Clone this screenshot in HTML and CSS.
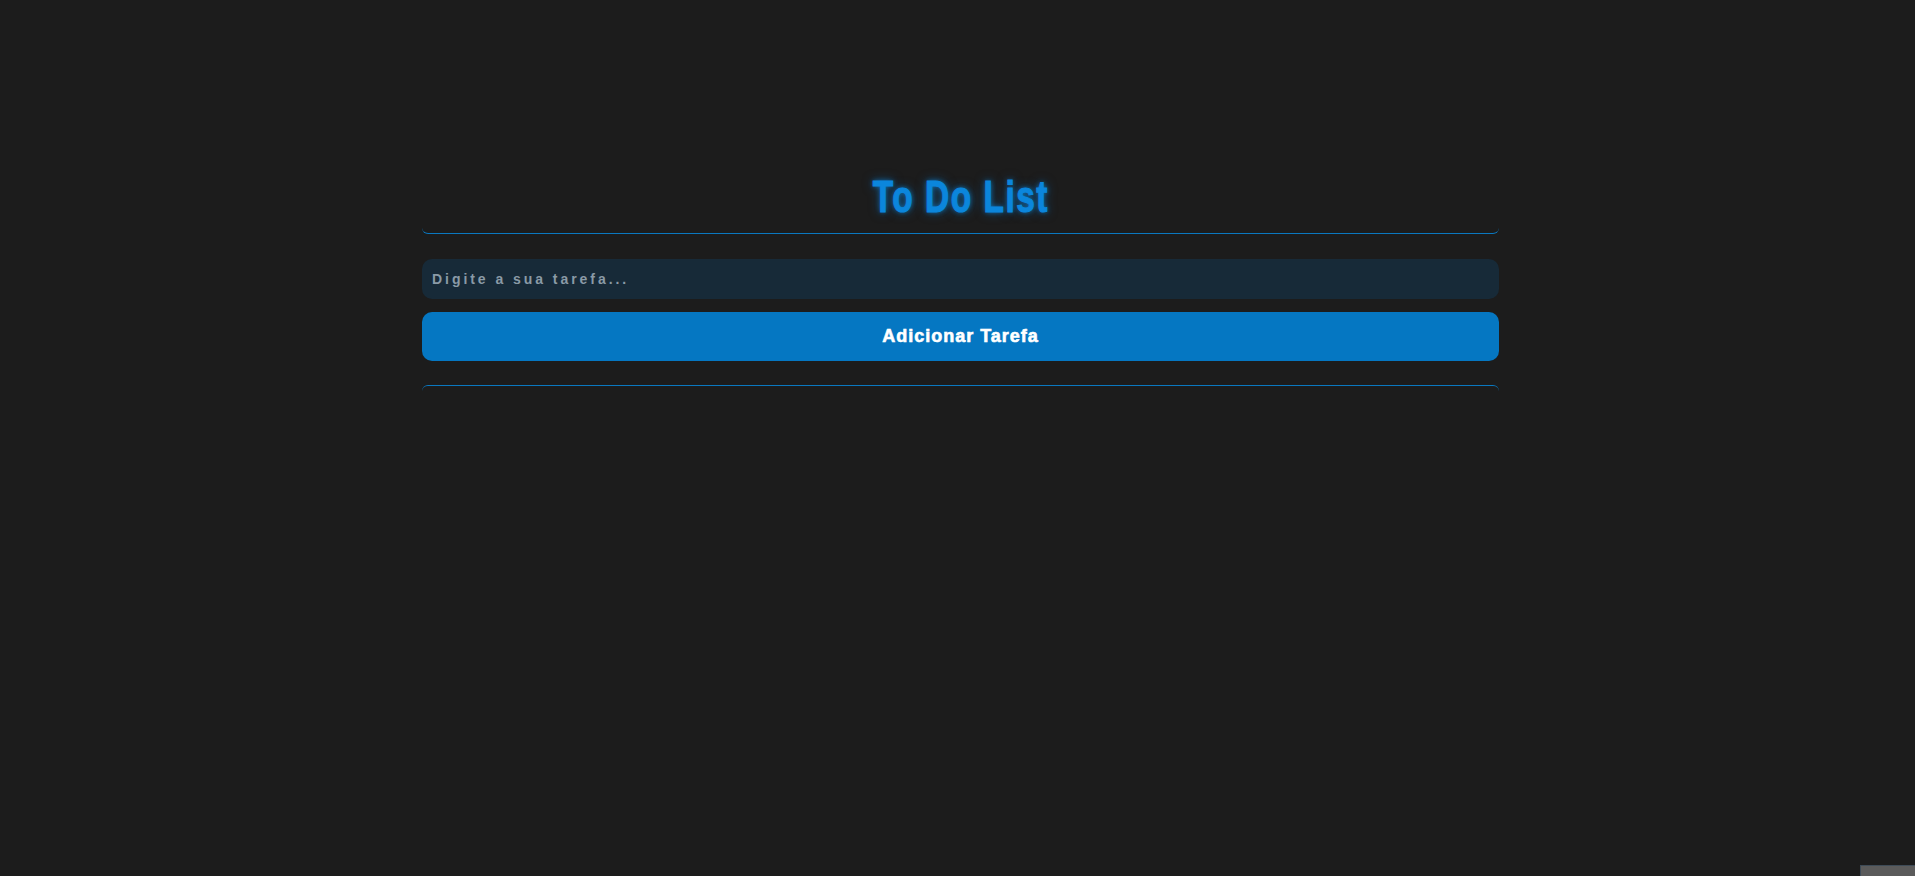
FILE: index.html
```html
<!DOCTYPE html>
<html lang="pt">
<head>
<meta charset="utf-8">
<title>To Do List</title>
<link rel="stylesheet" href="styles.css">
</head>
<body>
<main class="app">
  <header class="app-header">
    <h1 class="title"><span class="title-text">To Do List</span></h1>
  </header>
  <form class="task-form">
    <input class="task-input" type="text" placeholder="Digite a sua tarefa...">
    <button class="task-button" type="button">Adicionar Tarefa</button>
  </form>
  <ul class="task-list"></ul>
</main>
<div class="corner-box"></div>
</body>
</html>
```
FILE: styles.css
```css
html, body {
  margin: 0;
  padding: 0;
  height: 100%;
}
body {
  background: #1c1c1c;
  font-family: "Liberation Sans", Arial, sans-serif;
  overflow: hidden;
}
.app {
  width: 1077px;
  margin: 0 auto;
  padding-top: 172px;
  position: relative;
  left: 3px;
}
.app-header {
  border-bottom: 1px solid #0a78c0;
  border-radius: 0 0 6px 6px;
  text-align: center;
  padding-bottom: 11px;
}
.title {
  margin: 0;
  font-family: Impact, "Liberation Sans", Arial, sans-serif;
  font-weight: 700;
  font-size: 44px;
  line-height: 50px;
  color: #0b86dc;
  text-shadow: 0 0 6px rgba(10, 132, 220, 0.8), 0 0 12px rgba(10, 132, 220, 0.5);
}
.title-text {
  display: inline-block;
  letter-spacing: 2px;
  transform: scaleX(0.76);
  -webkit-text-stroke: 1px #0b86dc;
}
.task-form {
  display: flex;
  flex-direction: column;
  gap: 13px;
  margin-top: 25px;
}
.task-input {
  height: 40px;
  box-sizing: border-box;
  border: none;
  border-radius: 10px;
  background: #172a38;
  padding: 0 10px;
  font-family: "Liberation Sans", Arial, sans-serif;
  font-weight: 700;
  font-size: 14px;
  letter-spacing: 2.95px;
  color: #cfd8de;
  outline: none;
}
.task-input::placeholder {
  color: #8a9aa6;
}
.task-button {
  height: 49px;
  border: none;
  border-radius: 10px;
  background: #0577c2;
  color: #ffffff;
  font-family: "Liberation Sans", Arial, sans-serif;
  font-weight: 700;
  font-size: 18px;
  letter-spacing: 1px;
  -webkit-text-stroke: 0.6px #ffffff;
  cursor: pointer;
}
.task-list {
  list-style: none;
  margin: 24px 0 0;
  padding: 0;
  border-top: 1px solid #0a78c0;
  border-radius: 6px 6px 0 0;
  min-height: 10px;
}
.corner-box {
  position: fixed;
  right: 0;
  bottom: 0;
  width: 54px;
  height: 10px;
  background: #5b5b5b;
  border-top: 1px solid #3e4b57;
  border-left: 1px solid #3e4b57;
}
```
